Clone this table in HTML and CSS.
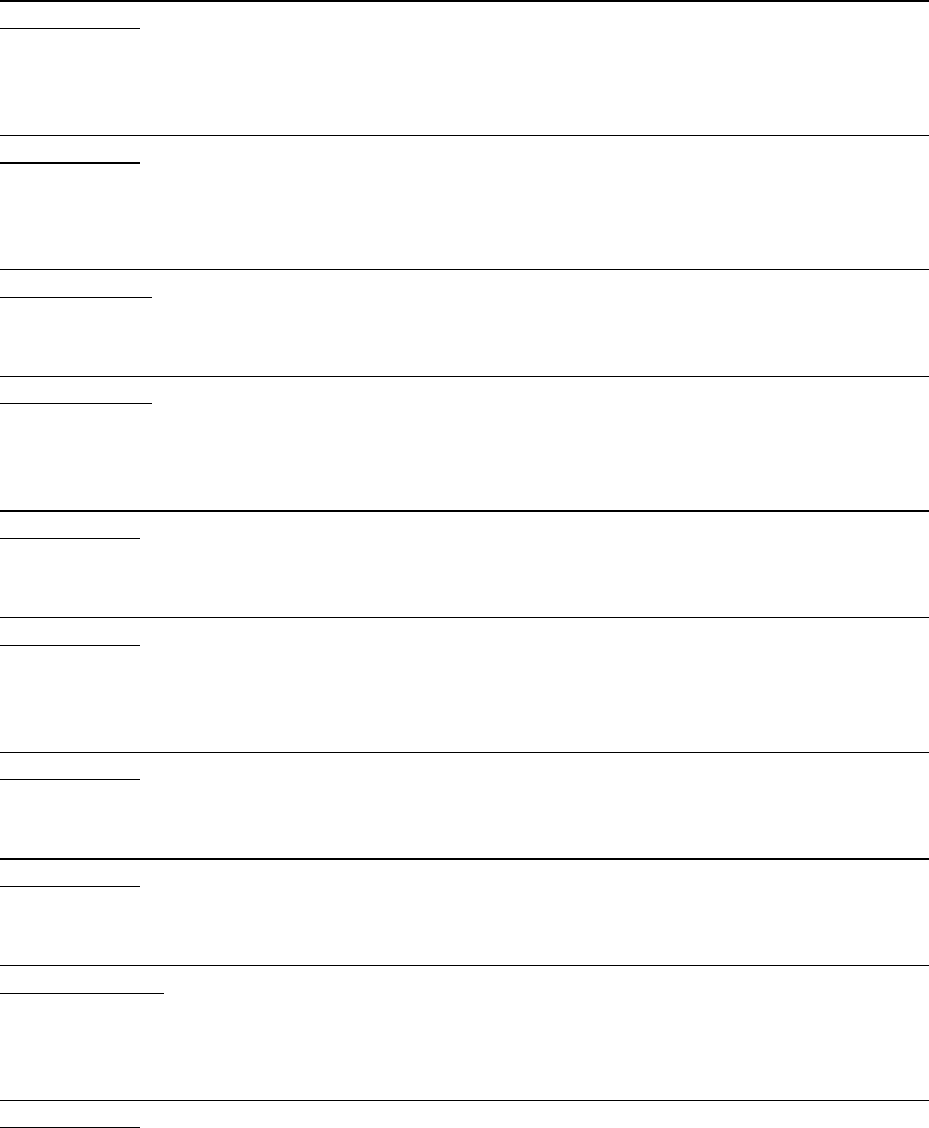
FILE: index.html
```html
<!DOCTYPE html>
<html lang="en">
<head>
<meta charset="utf-8">
<title>Sections</title>
<link rel="stylesheet" href="styles.css">
</head>
<body>
<main class="list">
  <section class="row tall heavy"><div class="title w140"></div></section>
  <section class="row tall"><div class="title w140 bold-line"></div></section>
  <section class="row short"><div class="title w152"></div></section>
  <section class="row tall"><div class="title w152"></div></section>
  <section class="row short heavy"><div class="title w140"></div></section>
  <section class="row tall"><div class="title w140"></div></section>
  <section class="row short"><div class="title w140"></div></section>
  <section class="row short heavy"><div class="title w140"></div></section>
  <section class="row tall"><div class="title w164"></div></section>
  <section class="row tall"><div class="title w140"></div></section>
</main>
</body>
</html>
```

FILE: styles.css
```css
html, body {
  margin: 0;
  padding: 0;
  background: #ffffff;
  font-family: "Liberation Serif", serif;
}

.list {
  display: flex;
  flex-direction: column;
}

.row {
  box-sizing: border-box;
  border-top: 1px solid #000000;
  flex: 0 0 auto;
}

.row.heavy {
  border-top-width: 2px;
}

.row.tall {
  height: 134.5px;
}

.row.short {
  height: 106.8px;
}

.title {
  box-sizing: border-box;
  height: 27.5px;
  border-bottom: 1px solid #000000;
}

.row.heavy .title {
  height: 27px;
}

.title.bold-line {
  height: 28px;
  border-bottom-width: 2px;
}

.w140 { width: 140px; }
.w152 { width: 152px; }
.w164 { width: 164px; }
```
